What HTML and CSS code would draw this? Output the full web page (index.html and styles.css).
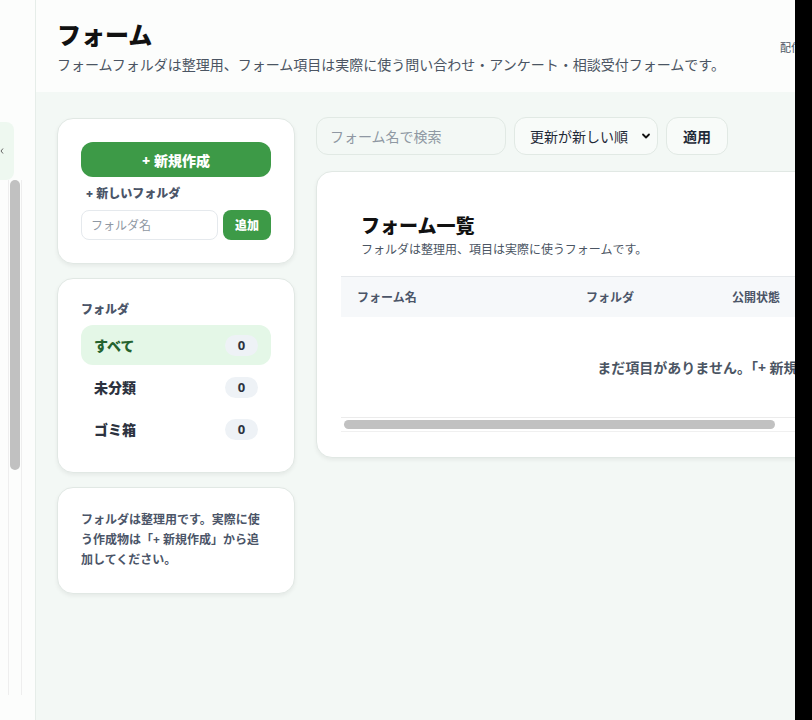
FILE: index.html
```html
<!DOCTYPE html>
<html lang="ja">
<head>
  <meta charset="UTF-8" />
  <meta name="viewport" content="width=device-width, initial-scale=1" />
  <title>フォーム</title>
  <link rel="stylesheet" href="styles.css">
</head>
<body>
  <div class="app">
    <aside class="sidebar">
      <div class="nav-item">
        <svg width="4" height="6" viewBox="0 0 4 6"><path d="M3 0.5 L1 3 L3 5.5" fill="none" stroke="#666" stroke-width="1"/></svg>
      </div>
      <div class="side-scroll">
        <div class="side-thumb"></div>
      </div>
    </aside>

    <main class="main">
      <header class="page-head">
        <div class="page-title">
          <h1>フォーム</h1>
          <p>フォームフォルダは整理用、フォーム項目は実際に使う問い合わせ・アンケート・相談受付フォームです。</p>
        </div>
        <div class="page-meta">配信中</div>
      </header>

      <div class="content">
        <!-- left column -->
        <div class="side-col">
          <section class="card">
            <button class="btn-primary">+&nbsp;新規作成</button>
            <div class="small-label">+&nbsp;新しいフォルダ</div>
            <div class="folder-form">
              <input type="text" class="folder-input" placeholder="フォルダ名">
              <button class="btn-add">追加</button>
            </div>
          </section>

          <section class="card">
            <div class="small-label">フォルダ</div>
            <ul class="folder-list">
              <li class="folder active"><span>すべて</span><span class="count">0</span></li>
              <li class="folder"><span>未分類</span><span class="count">0</span></li>
              <li class="folder"><span>ゴミ箱</span><span class="count">0</span></li>
            </ul>
          </section>

          <section class="card note">
            フォルダは整理用です。実際に使う作成物は「+&nbsp;新規作成」から追加してください。
          </section>
        </div>

        <!-- right column -->
        <div class="list-col">
          <div class="toolbar">
            <input type="text" class="search" placeholder="フォーム名で検索">
            <div class="sort">
              <span>更新が新しい順</span>
              <svg width="10" height="10" viewBox="0 0 10 10"><path d="M2 3.5 L5 6.5 L8 3.5" fill="none" stroke="#111" stroke-width="1.8" stroke-linecap="round" stroke-linejoin="round"/></svg>
            </div>
            <button class="btn-apply">適用</button>
          </div>

          <section class="card list-card">
            <div class="list-head">
              <h2>フォーム一覧</h2>
              <p>フォルダは整理用、項目は実際に使うフォームです。</p>
            </div>
            <div class="table-wrap">
              <table class="table">
                <colgroup>
                  <col style="width:229px"><col style="width:146px"><col style="width:140px">
                  <col style="width:130px"><col style="width:130px"><col style="width:133px">
                </colgroup>
                <thead>
                  <tr><th>フォーム名</th><th>フォルダ</th><th>公開状態</th><th>回答数</th><th>更新日</th><th>操作</th></tr>
                </thead>
                <tbody>
                  <tr><td colspan="6" class="empty">まだ項目がありません。「+&nbsp;新規作成」から追加してください。</td></tr>
                </tbody>
              </table>
              <div class="hscroll"><div class="hscroll-thumb"></div></div>
            </div>
          </section>
        </div>
      </div>
    </main>

    <div class="edge"></div>
  </div>
</body>
</html>
```

FILE: styles.css
```css
* {
  box-sizing: border-box;
}
html, body {
  margin: 0;
  height: 100%;
}
body {
  font-family: "Noto Sans", "Noto Sans CJK JP", sans-serif;
  color: #1f2937;
  background: #f3f8f5;
  overflow: hidden;
}
.app {
  display: flex;
  height: 720px;
}

/* sidebar */
.sidebar {
  width: 36px;
  flex: none;
  background: #fcfdfc;
  border-right: 1px solid #e6ede9;
  padding-top: 122px;
}
.nav-item {
  width: 14px;
  height: 58px;
  background: #eef8f0;
  border-radius: 0 8px 8px 0;
  display: flex;
  align-items: center;
}
.side-scroll {
  margin-left: 8px;
  width: 14px;
  height: 515px;
  border-left: 1px solid #eeeeee;
  border-right: 1px solid #eeeeee;
  padding: 0 1px;
}
.side-thumb {
  height: 290px;
  background: #c1c1c1;
  border-radius: 5px;
}

/* main */
.main {
  flex: 1;
  min-width: 0;
  overflow: hidden;
}
.page-head {
  height: 92px;
  background: #fcfdfc;
  padding: 18px 21px 0;
  display: flex;
  gap: 55px;
  white-space: nowrap;
}
.page-title h1 {
  margin: 0;
  font-size: 24px;
  font-weight: 900;
  color: #111;
  line-height: 34px;
}
.page-title p {
  margin: 3px 0 0;
  font-size: 14px;
  color: #4b5563;
  line-height: 20px;
}
.page-meta {
  font-size: 11px;
  color: #4b5563;
  padding-top: 21px;
}

.content {
  display: grid;
  grid-template-columns: 238px 960px;
  gap: 21px;
  padding: 26px 21px;
  width: 1300px;
  align-items: start;
}

.card {
  background: #fff;
  border: 1px solid #e1e8e4;
  border-radius: 16px;
  box-shadow: 0 2px 4px rgba(0,0,0,0.06);
  padding: 23px;
}
.side-col {
  display: flex;
  flex-direction: column;
  gap: 14px;
}

.btn-primary {
  display: block;
  width: 100%;
  height: 35px;
  border: none;
  border-radius: 12px;
  background: #3d9a47;
  color: #fff;
  font-family: inherit;
  font-size: 14px;
  font-weight: 900;
}
.small-label {
  font-size: 12px;
  font-weight: 900;
  color: #4b5568;
  line-height: 16px;
  margin: 9px 0 0 5px;
}
.folder-form {
  display: flex;
  gap: 5px;
  margin-top: 8px;
}
.folder-input {
  width: 137px;
  height: 30px;
  border: 1px solid #e5e9ed;
  border-radius: 8px;
  padding: 0 9px;
  font-family: inherit;
  font-size: 12px;
  background: #fff;
}
.folder-input::placeholder,
.search::placeholder {
  color: #8f98a3;
}
.btn-add {
  width: 48px;
  height: 30px;
  border: none;
  border-radius: 8px;
  background: #3d9a47;
  color: #fff;
  font-family: inherit;
  font-size: 12px;
  font-weight: 900;
}

.card .small-label:first-child {
  margin: 0;
}
.folder-list {
  list-style: none;
  margin: 7px 0 0;
  padding: 0;
  display: flex;
  flex-direction: column;
  gap: 2px;
}
.folder {
  height: 40px;
  border-radius: 12px;
  padding: 0 13px;
  display: flex;
  align-items: center;
  justify-content: space-between;
  font-size: 14px;
  font-weight: 900;
  color: #2d3340;
}
.folder.active {
  background: #e4f7e7;
  color: #24632f;
}
.count {
  min-width: 33px;
  height: 21px;
  border-radius: 11px;
  background: #eef2f6;
  color: #2d3340;
  font-size: 13px;
  font-weight: 700;
  display: flex;
  align-items: center;
  justify-content: center;
}

.note {
  font-size: 12px;
  font-weight: 700;
  color: #4b5568;
  line-height: 20px;
  padding: 22px 24px 23px 23px;
}

/* list */
.toolbar {
  display: flex;
  gap: 8px;
  height: 38px;
  margin-top: -1px;
}
.search {
  width: 190px;
  height: 38px;
  border: 1px solid #e1e9e4;
  border-radius: 12px;
  background: #f3f8f5;
  padding: 0 13px;
  font-family: inherit;
  font-size: 14px;
}
.sort {
  width: 144px;
  height: 38px;
  border: 1px solid #e1e9e4;
  border-radius: 12px;
  background: #f8fbf9;
  display: flex;
  align-items: center;
  justify-content: space-between;
  padding: 0 6px 0 15px;
  font-size: 14px;
  color: #1f2937;
}
.btn-apply {
  width: 62px;
  height: 38px;
  border: 1px solid #e1e9e4;
  border-radius: 12px;
  background: #f8fbf9;
  font-family: inherit;
  font-size: 14px;
  font-weight: 700;
  color: #1f2937;
}

.list-card {
  margin-top: 16px;
  padding: 24px 24px 25px;
}
.list-head {
  padding: 18px 20px 0;
}
.list-head h2 {
  margin: 0;
  font-size: 19px;
  font-weight: 900;
  color: #111;
  line-height: 24px;
}
.list-head p {
  margin: 3px 0 0;
  font-size: 12px;
  color: #4b5563;
  line-height: 18px;
}
.table-wrap {
  margin-top: 17px;
  width: 908px;
}
.table {
  width: 908px;
  border-collapse: collapse;
  table-layout: fixed;
  border-top: 1px solid #e6e9ec;
}
.table th {
  background: #f6f8fa;
  height: 40px;
  text-align: left;
  padding: 0 16px;
  font-size: 12px;
  font-weight: 700;
  color: #4b5568;
}
.table td.empty {
  height: 100px;
  text-align: center;
  font-size: 14px;
  font-weight: 700;
  color: #4b5563;
}
.hscroll {
  height: 15px;
  border-top: 1px solid #ebebeb;
  border-bottom: 1px solid #f0f0f0;
  padding: 2px 3px;
}
.hscroll-thumb {
  width: 431px;
  height: 9px;
  border-radius: 5px;
  background: #c1c1c1;
}

.edge {
  width: 17px;
  flex: none;
  background: #000;
}
```
